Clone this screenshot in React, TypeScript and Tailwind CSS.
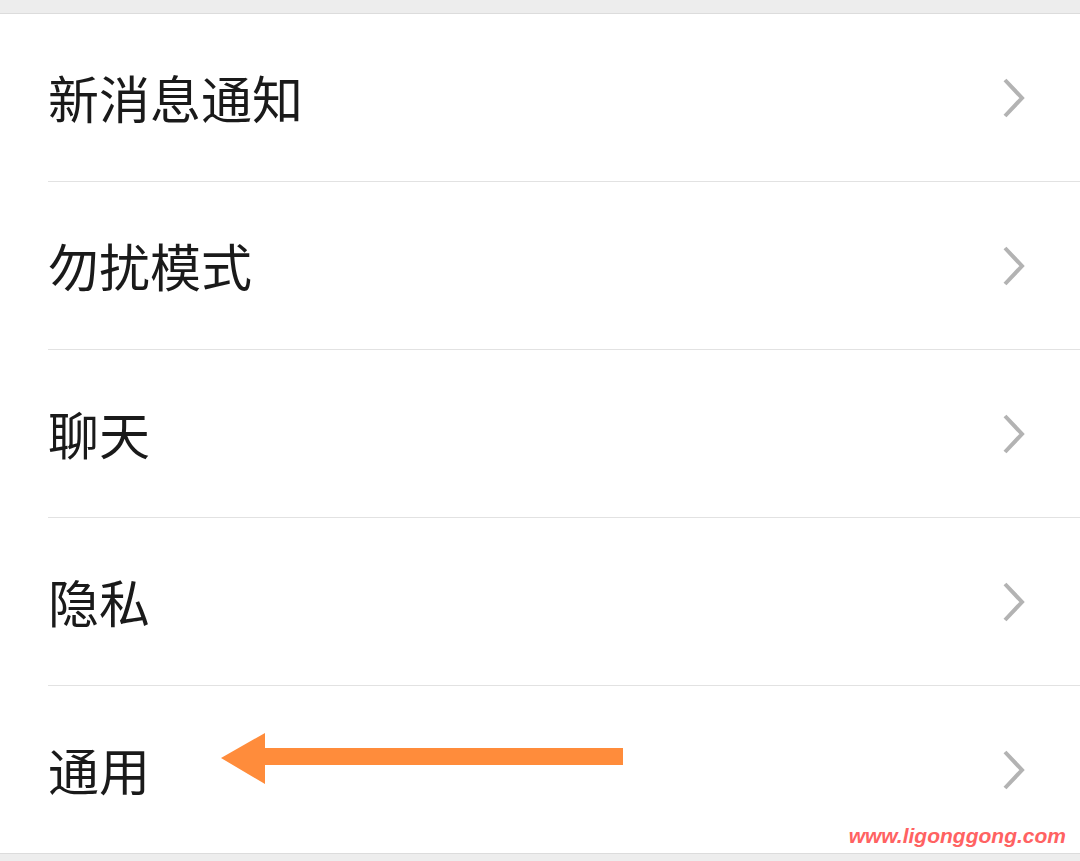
import React from "react";

const items = ["新消息通知", "勿扰模式", "聊天", "隐私", "通用"];

function Chevron() {
  return (
    <svg width="26" height="42" viewBox="0 0 26 42" className="mr-[53px]">
      <path d="M4 3 L21 21 L4 39" fill="none" stroke="#b3b3b3" strokeWidth="4" />
    </svg>
  );
}

function Arrow() {
  return (
    <svg width="410" height="56" viewBox="0 0 410 56" className="absolute left-[219px] top-[45px]">
      <path d="M2 27 L46 2 L46 17 L404 17 L404 34 L46 34 L46 53 Z" fill="#ff8c3b" />
    </svg>
  );
}

export default function App() {
  return (
    <div className="w-[1080px] h-[861px] bg-[#ededed] overflow-hidden" style={{ fontFamily: '"Noto Sans CJK SC", "Noto Sans", sans-serif' }}>
      <div className="h-[14px] border-b border-[#dcdcdc]" />
      <div className="bg-white">
        {items.map((label, i) => (
          <div key={label} className="relative">
            <div className="h-[167px] flex items-center justify-between pl-[48px]">
              <span className="text-[51px] leading-none text-[#1a1a1a]">{label}</span>
              <Chevron />
            </div>
            {i < items.length - 1 && <div className="ml-[48px] h-px bg-[#e2e2e2]" />}
            {label === "通用" && <Arrow />}
            {label === "通用" && (
              <span
                className="absolute right-[14px] bottom-[7px] text-[21px] leading-none font-bold italic text-[#ff6262]"
                style={{ fontFamily: '"Liberation Sans", Arial, sans-serif' }}
              >
                www.ligonggong.com
              </span>
            )}
          </div>
        ))}
      </div>
      <div className="border-t border-[#dcdcdc]" />
    </div>
  );
}
